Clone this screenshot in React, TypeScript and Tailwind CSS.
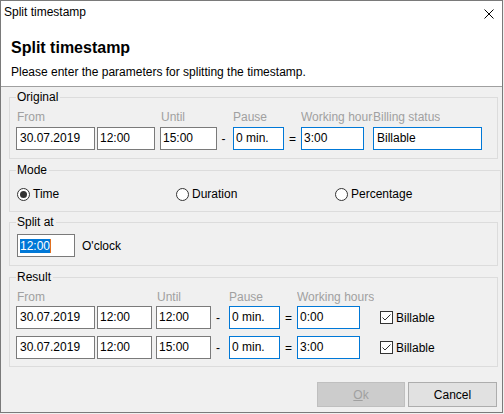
import clsx from "clsx";

const font = "font-['Liberation_Sans',Arial,sans-serif]";

function Box({ value, blue, className }: { value: string; blue?: boolean; className: string }) {
  return (
    <div
      className={clsx(
        "h-[23px] shrink-0 bg-white border flex items-center pl-[2px] text-[12px] leading-[15px] text-black",
        blue ? "border-[#0078d7]" : "border-[#7a7a7a]",
        className
      )}
    >
      {value}
    </div>
  );
}

function Radio({ label, checked }: { label: string; checked?: boolean }) {
  return (
    <div className="w-[159px] flex items-center">
      <span className="w-[13px] h-[13px] rounded-full border border-[#333333] bg-white flex items-center justify-center">
        {checked && <span className="w-[7px] h-[7px] rounded-full bg-[#333333]" />}
      </span>
      <span className="ml-[3px]">{label}</span>
    </div>
  );
}

function Check({ label }: { label: string }) {
  return (
    <div className="flex items-center ml-[20px]">
      <span className="w-[13px] h-[13px] border border-[#333333] bg-white flex items-center justify-center">
        <svg width="11" height="11" viewBox="0 0 11 11">
          <polyline points="1.5,5.5 4,8 9.5,2.5" fill="none" stroke="#333333" strokeWidth="1" />
        </svg>
      </span>
      <span className="ml-[3px]">{label}</span>
    </div>
  );
}

function Group({ title, className, children }: { title: string; className: string; children: React.ReactNode }) {
  return (
    <fieldset className={clsx("border border-[#dcdcdc] px-[6px]", className)}>
      <legend className="leading-[15px] pr-[2px] pl-[1px] text-black">{title}</legend>
      {children}
    </fieldset>
  );
}

const label = "text-[#a0a0a0] whitespace-nowrap overflow-hidden shrink-0 leading-[15px]";

export default function App() {
  return (
    <div className={clsx("w-[504px] h-[414px] bg-[#f0f0f0] text-[12px] text-black", font)}>
      <div className="w-[503px] h-[413px] border border-[#7a7a7a] flex flex-col bg-[#f0f0f0]">
        {/* title bar + header */}
        <div className="bg-white border-b border-[#a0a0a0] pb-[6px]">
          <div className="flex justify-between pl-[3px] pr-[8px] pt-[4px] leading-[15px]">
            <span>Split timestamp</span>
            <svg width="10" height="10" viewBox="0 0 10 10" className="mt-[4px]">
              <path d="M0.5 0.5 L9.5 9.5 M9.5 0.5 L0.5 9.5" stroke="#000" strokeWidth="1" />
            </svg>
          </div>
          <div className="pl-[10px] mt-[18px] text-[16px] leading-[20px] font-bold">Split timestamp</div>
          <div className="pl-[10px] mt-[7px] leading-[15px]">Please enter the parameters for splitting the timestamp.</div>
        </div>

        <div className="flex flex-col pl-[8px] pr-[4px] pt-[3px]">
          {/* Original */}
          <Group title="Original" className="pt-[5px] pb-[8px]">
            <div className="flex">
              <span className={clsx(label, "w-[144px] pl-[1px]")}>From</span>
              <span className={clsx(label, "w-[73px] pl-[1px]")}>Until</span>
              <span className={clsx(label, "w-[68px]")}>Pause</span>
              <span className={clsx(label, "w-[72px]")}>Working hours</span>
              <span className={clsx(label, "bg-[#f0f0f0]")}>Billing status</span>
            </div>
            <div className="flex items-center mt-[2px]">
              <Box value="30.07.2019" className="w-[79px] pl-[3px]" />
              <Box value="12:00" className="w-[58px] ml-[2px]" />
              <Box value="15:00" className="w-[57px] ml-[5px]" />
              <span className="w-[13px] text-center">-</span>
              <Box value="0 min." blue className="w-[51px] ml-[3px]" />
              <span className="w-[17px] text-center">=</span>
              <Box value="3:00" blue className="w-[63px]" />
              <Box value="Billable" blue className="w-[109px] ml-[9px] pl-[3px]" />
            </div>
          </Group>

          {/* Mode */}
          <Group title="Mode" className="mt-[4px] pt-[8px] pb-[9px]">
            <div className="flex h-[16px] ml-[1px]">
              <Radio label="Time" checked />
              <Radio label="Duration" />
              <Radio label="Percentage" />
            </div>
          </Group>

          {/* Split at */}
          <Group title="Split at" className="mt-[3px] pt-[4px] pb-[8px]">
            <div className="flex items-center">
              <div className="h-[23px] w-[58px] ml-[1px] bg-white border border-[#7a7a7a] flex items-center pl-[2px]">
                <span className="bg-[#0078d7] text-white leading-[14px]">12:00</span>
                <span className="w-[1px] h-[14px] bg-[#e07020]" />
              </div>
              <span className="ml-[7px]">O'clock</span>
            </div>
          </Group>

          {/* Result */}
          <Group title="Result" className="mt-[4px] pt-[5px] pb-[7px]">
            <div className="flex">
              <span className={clsx(label, "w-[140px] pl-[1px]")}>From</span>
              <span className={clsx(label, "w-[73px] pl-[1px]")}>Until</span>
              <span className={clsx(label, "w-[68px]")}>Pause</span>
              <span className={clsx(label)}>Working hours</span>
            </div>
            {[
              { until: "12:00", hours: "0:00" },
              { until: "15:00", hours: "3:00" },
            ].map((r, i) => (
              <div key={i} className={clsx("flex items-center", i === 0 ? "mt-[1px]" : "mt-[7px]")}>
                <Box value="30.07.2019" className="w-[79px] pl-[3px]" />
                <Box value="12:00" className="w-[55px] ml-[2px]" />
                <Box value={r.until} className="w-[55px] ml-[4px]" />
                <span className="w-[14px] text-center">-</span>
                <Box value="0 min." blue className="w-[51px] ml-[4px]" />
                <span className="w-[17px] text-center">=</span>
                <Box value={r.hours} blue className="w-[63px]" />
                <Check label="Billable" />
              </div>
            ))}
          </Group>

          {/* Buttons */}
          <div className="flex justify-end mt-[15px] pr-[1px] gap-[3px]">
            <button className="w-[88px] h-[25px] bg-[#cccccc] border border-[#bfbfbf] text-[#a0a0a0]">
              <span className="underline">O</span>k
            </button>
            <button className="w-[89px] h-[25px] bg-[#e1e1e1] border border-[#adadad] text-black">Cancel</button>
          </div>
        </div>
      </div>
    </div>
  );
}
